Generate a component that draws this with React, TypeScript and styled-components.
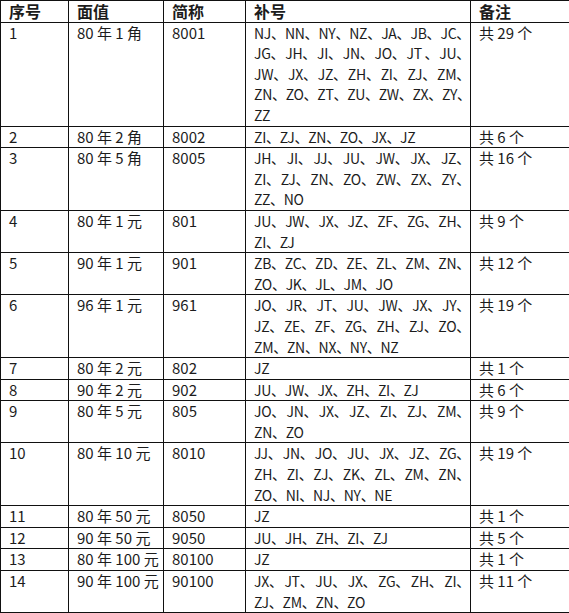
import React from 'react'
import styled, { createGlobalStyle } from 'styled-components'

type Row = {
  no: string
  face: string
  short: string
  lines: string[][]
  note: string
}

const rows: Row[] = [
  {
    no: '1', face: '80 年 1 角', short: '8001', note: '共 29 个',
    lines: [
      ['NJ、', 'NN、', 'NY、', 'NZ、', 'JA、', 'JB、', 'JC、'],
      ['JG、', 'JH、', 'JI、', 'JN、', 'JO、', 'JT 、', 'JU、'],
      ['JW、', 'JX、', 'JZ、', 'ZH、', 'ZI、', 'ZJ、', 'ZM、'],
      ['ZN、', 'ZO、', 'ZT、', 'ZU、', 'ZW、', 'ZX、', 'ZY、'],
      ['ZZ'],
    ],
  },
  { no: '2', face: '80 年 2 角', short: '8002', note: '共 6 个', lines: [['ZI、', 'ZJ、', 'ZN、', 'ZO、', 'JX、', 'JZ']] },
  {
    no: '3', face: '80 年 5 角', short: '8005', note: '共 16 个',
    lines: [
      ['JH、', 'JI、', 'JJ、', 'JU、', 'JW、', 'JX、', 'JZ、'],
      ['ZI、', 'ZJ、', 'ZN、', 'ZO、', 'ZW、', 'ZX、', 'ZY、'],
      ['ZZ、', 'NO'],
    ],
  },
  {
    no: '4', face: '80 年 1 元', short: '801', note: '共 9 个',
    lines: [['JU、', 'JW、', 'JX、', 'JZ、', 'ZF、', 'ZG、', 'ZH、'], ['ZI、', 'ZJ']],
  },
  {
    no: '5', face: '90 年 1 元', short: '901', note: '共 12 个',
    lines: [['ZB、', 'ZC、', 'ZD、', 'ZE、', 'ZL、', 'ZM、', 'ZN、'], ['ZO、', 'JK、', 'JL、', 'JM、', 'JO']],
  },
  {
    no: '6', face: '96 年 1 元', short: '961', note: '共 19 个',
    lines: [
      ['JO、', 'JR、', 'JT、', 'JU、', 'JW、', 'JX、', 'JY、'],
      ['JZ、', 'ZE、', 'ZF、', 'ZG、', 'ZH、', 'ZJ、', 'ZO、'],
      ['ZM、', 'ZN、', 'NX、', 'NY、', 'NZ'],
    ],
  },
  { no: '7', face: '80 年 2 元', short: '802', note: '共 1 个', lines: [['JZ']] },
  { no: '8', face: '90 年 2 元', short: '902', note: '共 6 个', lines: [['JU、', 'JW、', 'JX、', 'ZH、', 'ZI、', 'ZJ']] },
  {
    no: '9', face: '80 年 5 元', short: '805', note: '共 9 个',
    lines: [['JO、', 'JN、', 'JX、', 'JZ、', 'ZI、', 'ZJ、', 'ZM、'], ['ZN、', 'ZO']],
  },
  {
    no: '10', face: '80 年 10 元', short: '8010', note: '共 19 个',
    lines: [
      ['JJ、', 'JN、', 'JO、', 'JU、', 'JX、', 'JZ、', 'ZG、'],
      ['ZH、', 'ZI、', 'ZJ、', 'ZK、', 'ZL、', 'ZM、', 'ZN、'],
      ['ZO、', 'NI、', 'NJ、', 'NY、', 'NE'],
    ],
  },
  { no: '11', face: '80 年 50 元', short: '8050', note: '共 1 个', lines: [['JZ']] },
  { no: '12', face: '90 年 50 元', short: '9050', note: '共 5 个', lines: [['JU、', 'JH、', 'ZH、', 'ZI、', 'ZJ']] },
  { no: '13', face: '80 年 100 元', short: '80100', note: '共 1 个', lines: [['JZ']] },
  {
    no: '14', face: '90 年 100 元', short: '90100', note: '共 11 个',
    lines: [['JX、', 'JT、', 'JU、', 'JX、', 'ZG、', 'ZH、', 'ZI、'], ['ZJ、', 'ZM、', 'ZN、', 'ZO']],
  },
]

const GlobalStyle = createGlobalStyle`
  html, body {
    margin: 0;
    padding: 0;
    background: #ffffff;
  }
  body {
    font-family: "Noto Sans CJK SC", "Noto Sans", sans-serif;
    color: #1c1c1c;
  }
`

const Table = styled.table`
  width: 569px;
  table-layout: fixed;
  border-collapse: collapse;
  font-size: 15px;
  line-height: 20.6px;
`

const Cell = styled.td<{ $codes?: boolean }>`
  border: 1px solid #111;
  padding: ${p => (p.$codes ? '0 0 0 8px' : '0 8px')};
  font-size: ${p => (p.$codes ? '14px' : '15px')};
  letter-spacing: ${p => (p.$codes ? '-0.3px' : '0')};
  vertical-align: top;
  white-space: nowrap;
`

const HeadCell = styled.th`
  border: 1px solid #111;
  padding: 0 8px;
  text-align: left;
  font-size: 16px;
  font-weight: 700;
  vertical-align: top;
`

const Line = styled.div<{ $justify: boolean }>`
  display: flex;
  justify-content: ${p => (p.$justify ? 'space-between' : 'flex-start')};
`

const Token = styled.span`
  white-space: pre;
`

export default function App() {
  return (
    <>
      <GlobalStyle />
      <Table>
        <colgroup>
          <col style={{ width: 68 }} />
          <col style={{ width: 95 }} />
          <col style={{ width: 82 }} />
          <col style={{ width: 225 }} />
          <col style={{ width: 99 }} />
        </colgroup>
        <thead>
          <tr>
            <HeadCell>序号</HeadCell>
            <HeadCell>面值</HeadCell>
            <HeadCell>简称</HeadCell>
            <HeadCell>补号</HeadCell>
            <HeadCell>备注</HeadCell>
          </tr>
        </thead>
        <tbody>
          {rows.map(r => (
            <tr key={r.no}>
              <Cell>{r.no}</Cell>
              <Cell>{r.face}</Cell>
              <Cell>{r.short}</Cell>
              <Cell $codes>
                {r.lines.map((ln, i) => (
                  <Line key={i} $justify={i < r.lines.length - 1}>
                    {ln.map((t, j) => (
                      <Token key={j}>{t}</Token>
                    ))}
                  </Line>
                ))}
              </Cell>
              <Cell>{r.note}</Cell>
            </tr>
          ))}
        </tbody>
      </Table>
    </>
  )
}
